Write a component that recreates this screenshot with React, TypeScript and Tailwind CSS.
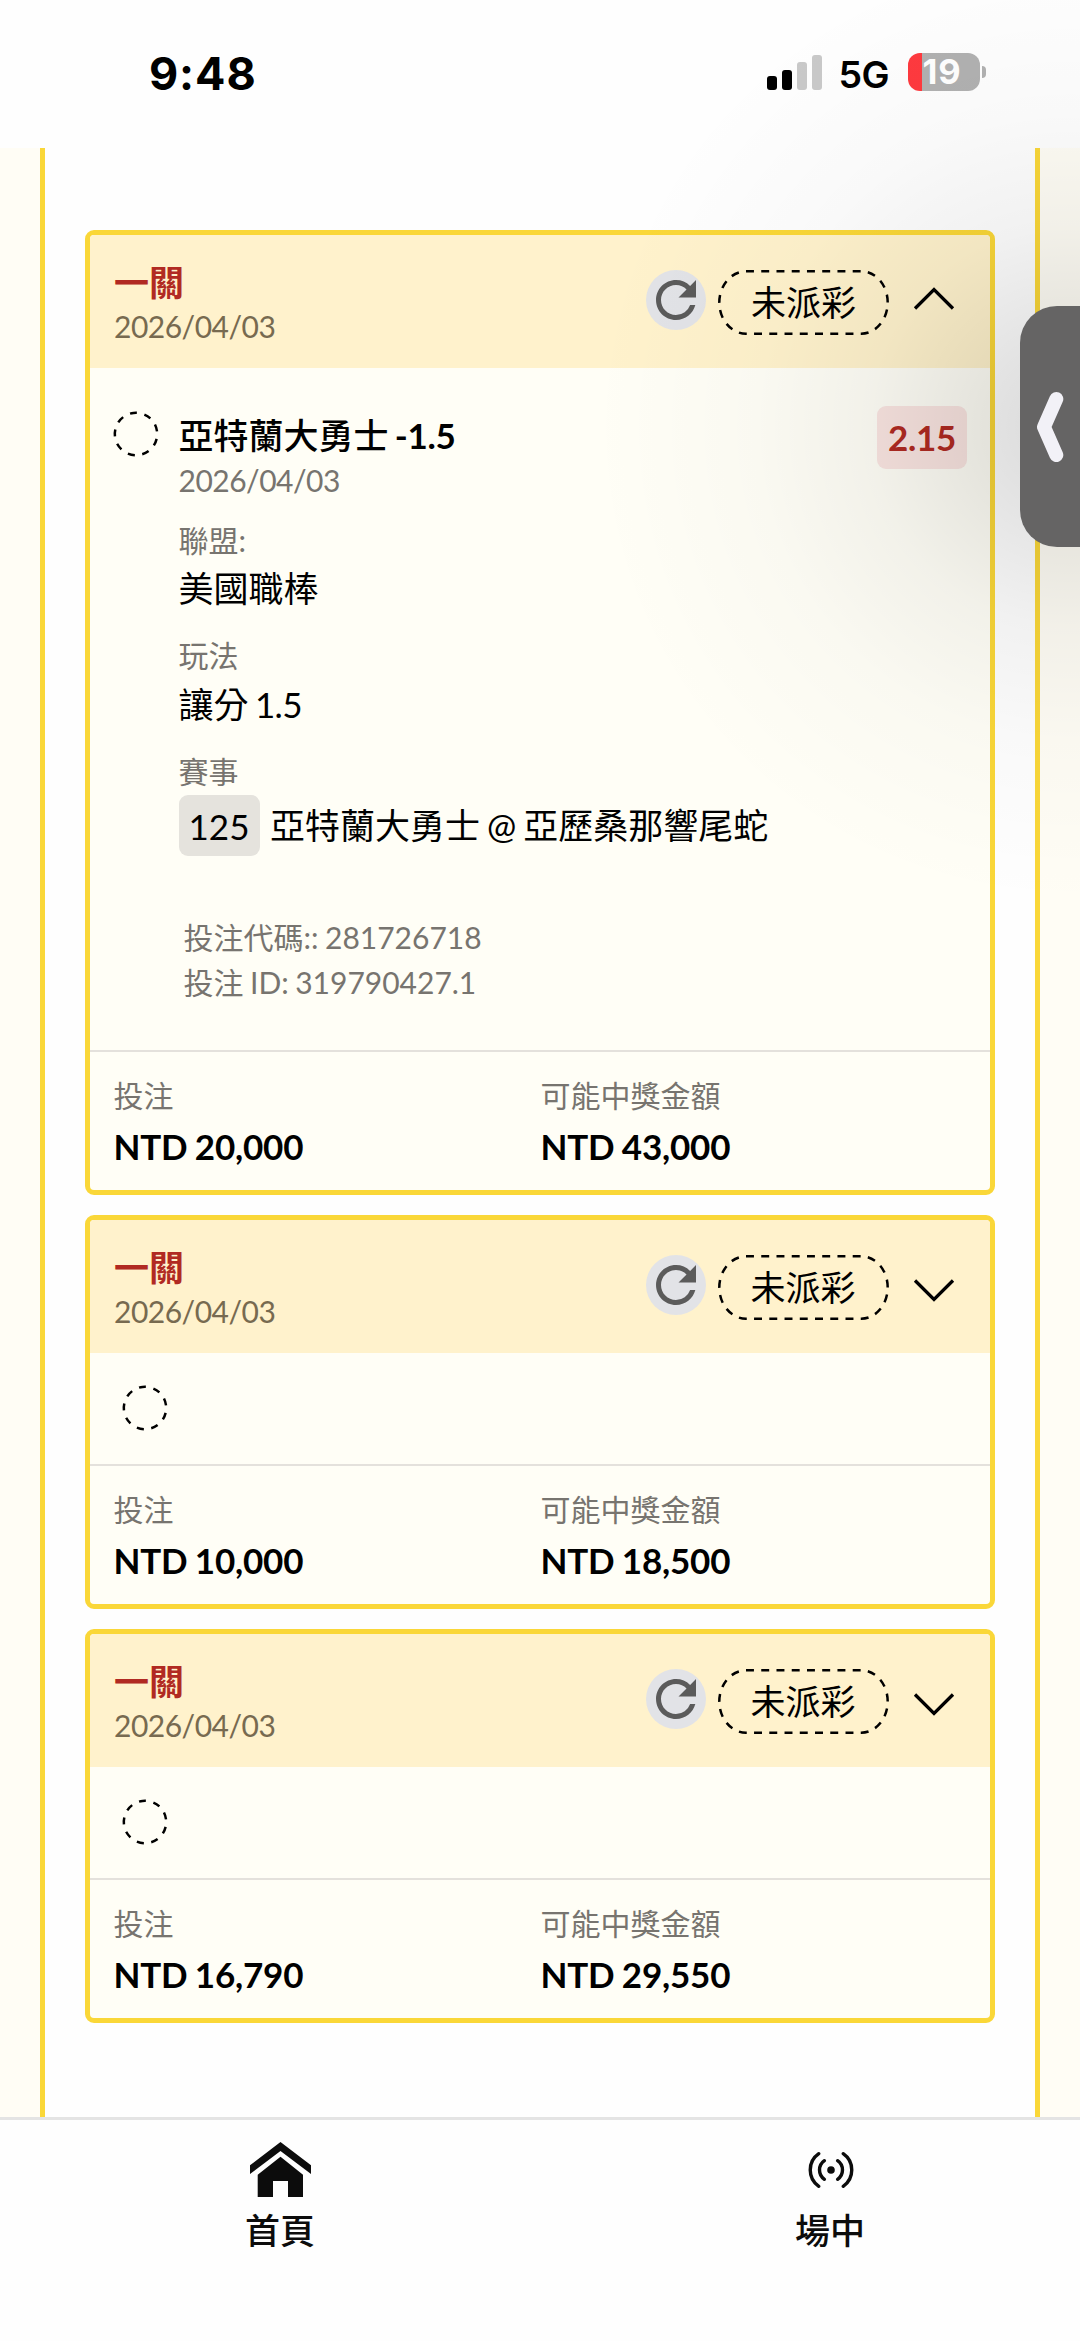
import { MdRefresh } from "react-icons/md";

type Bet = { stake: string; payout: string; open?: boolean };

const bets: Bet[] = [
  { stake: "NTD 20,000", payout: "NTD 43,000", open: true },
  { stake: "NTD 10,000", payout: "NTD 18,500" },
  { stake: "NTD 16,790", payout: "NTD 29,550" },
];

function StatusBar() {
  return (
    <header className="flex h-[148px] items-start justify-between bg-[#fefefe] pr-[94px] pl-[149px] font-['Inter',sans-serif]">
      <div className="mt-[48px] text-[45px] leading-[52px] font-bold tracking-[0.9px] text-black">9:48</div>
      <div className="mt-[53px] flex h-[38px] items-center">
        <div className="flex h-[35px] items-end gap-[5.5px]">
          <div className="h-[14px] w-[9.5px] rounded-[3px] bg-black" />
          <div className="h-[20px] w-[9.5px] rounded-[3px] bg-black" />
          <div className="h-[28px] w-[9.5px] rounded-[3px] bg-[#c9c9c9]" />
          <div className="h-[35px] w-[9.5px] rounded-[3px] bg-[#c9c9c9]" />
        </div>
        <div className="mt-[5px] ml-[17px] w-[51px] text-[37.5px] leading-[38px] font-semibold tracking-[-0.5px] text-black">5G</div>
        <div className="ml-[18px] flex h-[38px] w-[72px] items-center rounded-[12px] bg-[linear-gradient(90deg,#ff3a3f_14px,#b1b1b1_14px)] pl-[15px] text-[34.5px] leading-[38px] font-bold tracking-[0.8px] text-white">
          19
        </div>
        <div className="ml-[2px] h-[12px] w-[4.5px] rounded-r-[5px] bg-[#b1b1b1]" />
      </div>
    </header>
  );
}

function PendingCircle() {
  return (
    <svg className="h-[46px] w-[46px] shrink-0" viewBox="-23 -23 46 46" fill="none">
      <circle r="21.2" stroke="#000" strokeWidth="2.5" pathLength="135" strokeDasharray="7.2 7.8" transform="rotate(173.4)" />
    </svg>
  );
}

function StatusPill() {
  return (
    <div className="relative flex h-[65px] w-[171px] items-center justify-center text-[35px] leading-[40px] text-black">
      <svg className="absolute inset-0 h-full w-full" viewBox="0 0 171 65" fill="none">
        <path
          d="M28 1.3H143A26.5 31.2 0 0 1 169.7 32.5A26.5 31.2 0 0 1 143 63.7H28A26.8 31.2 0 0 1 1.3 32.5A26.8 31.2 0 0 1 28 1.3Z"
          stroke="#000"
          strokeWidth="2.5"
          pathLength="414"
          strokeDasharray="8 7.333"
        />
      </svg>
      <span className="-mt-[2px]">未派彩</span>
    </div>
  );
}

function Chevron({ up }: { up?: boolean }) {
  return (
    <svg className="h-[24px] w-[42px]" viewBox="0 0 42 24" fill="none" stroke="#000" strokeWidth="3.3">
      <path d={up ? "M2 21.5 21 2.5 40 21.5" : "M2 2.5 21 21.5 40 2.5"} />
    </svg>
  );
}

function BetHeader({ open }: { open?: boolean }) {
  return (
    <div className="flex h-[133px] justify-between bg-[#fff2cc] pr-[35px] pl-[24px]">
      <div className="pt-[27px]">
        <div className="text-[35px] leading-[40px] font-bold text-[#b12a22]">一關</div>
        <div className="mt-[5px] text-[30px] leading-[38px] tracking-[-0.5px] text-[#776a50]">2026/04/03</div>
      </div>
      <div className="flex items-start">
        <div className="mt-[35px] h-[60px] w-[60px] rounded-full bg-[#e2e3e7] text-[60px] text-[#5b5b5b]">
          <MdRefresh />
        </div>
        <div className="mt-[35px] ml-[12px]">
          <StatusPill />
        </div>
        <div className={open ? "mt-[52px] ml-[24px]" : "mt-[58px] ml-[24.5px]"}>
          <Chevron up={open} />
        </div>
      </div>
    </div>
  );
}

function BetDetails() {
  return (
    <div className="flex h-[682px] pr-[23px] pl-[24px]">
      <div className="-ml-[1.5px] pt-[42.5px]">
        <PendingCircle />
      </div>
      <div className="ml-[20px] flex-1 pt-[47px] text-black">
        <div className="text-[35px] leading-[40px] font-medium">
          亞特蘭大勇士 <span className="font-bold tracking-[-0.3px]">-1.5</span>
        </div>
        <div className="mt-[6px] text-[30px] leading-[38px] tracking-[-0.5px] text-[#77746f]">2026/04/03</div>
        <div className="mt-[21px] text-[30px] leading-[40px] text-[#77746f]">聯盟:</div>
        <div className="mt-[6px] text-[35px] leading-[44px]">美國職棒</div>
        <div className="mt-[25px] text-[30px] leading-[40px] text-[#77746f]">玩法</div>
        <div className="mt-[7px] text-[35px] leading-[44px]">
          讓分 <span className="tracking-[-0.7px]">1.5</span>
        </div>
        <div className="mt-[25px] text-[30px] leading-[40px] text-[#77746f]">賽事</div>
        <div className="mt-[4px] flex h-[61px] items-center text-[35px] leading-[44px] whitespace-nowrap">
          <span className="flex h-[61px] w-[81px] items-center justify-center rounded-[9px] bg-[#e5e3dd]">125</span>
          <span className="-mt-[2px] ml-[10.5px] [word-spacing:-2px]">亞特蘭大勇士 @ 亞歷桑那響尾蛇</span>
        </div>
        <div className="mt-[59px] ml-[5px] text-[30px] leading-[45px] text-[#77746f] [word-spacing:-1.2px]">
          <div>投注代碼:: 281726718</div>
          <div>投注 ID: 319790427.1</div>
        </div>
      </div>
      <div className="mt-[38px] flex h-[63px] w-[90px] shrink-0 items-center justify-center rounded-[9px] bg-[#fae5e1] text-[35px] font-bold tracking-[-0.3px] text-[#b12a22]">
        2.15
      </div>
    </div>
  );
}

function Amount({ label, value }: { label: string; value: string }) {
  return (
    <div>
      <div className="text-[30px] leading-[40px] text-[#77746f]">{label}</div>
      <div className="mt-[9px] text-[35px] leading-[44px] font-bold tracking-[-0.2px] text-black [word-spacing:-1px]">{value}</div>
    </div>
  );
}

function BetCard({ bet }: { bet: Bet }) {
  return (
    <article className="overflow-hidden rounded-[9px] border-[5px] border-[#fad738] bg-[#fffef6]">
      <BetHeader open={bet.open} />
      {bet.open ? (
        <BetDetails />
      ) : (
        <div className="flex h-[111px] items-center pb-[1px] pl-[32px]">
          <PendingCircle />
        </div>
      )}
      <div className="grid h-[140px] grid-cols-[427px_1fr] border-t-2 border-[#e4e1dc] pt-[23px] pl-[23.5px]">
        <Amount label="投注" value={bet.stake} />
        <Amount label="可能中獎金額" value={bet.payout} />
      </div>
    </article>
  );
}

function HomeIcon() {
  return (
    <svg className="h-[55px] w-[61px]" viewBox="0 0 61 55" fill="#0c0c0c">
      <path d="M30.5 0 61 23.3V32L30.5 9 0 32V23.3Z" />
      <path d="M30.5 14.7 53 32.7V55H38V39H23V55H7.7V32.7Z" />
    </svg>
  );
}

function LiveIcon() {
  return (
    <svg className="ml-[2px] h-[40px] w-[48px]" viewBox="-24 -20 48 40" fill="none" stroke="#0c0c0c" strokeWidth="3.4" strokeLinecap="round">
      <path d="M-12.2 -16.3A19.8 19.8 0 0 0 -12.2 16.3M12.2 -16.3A19.8 19.8 0 0 1 12.2 16.3" />
      <path d="M-6.6 -9.3A11.3 11.3 0 0 0 -6.6 9.3M6.6 -9.3A11.3 11.3 0 0 1 6.6 9.3" />
      <circle r="3.8" fill="#0c0c0c" stroke="none" />
    </svg>
  );
}

function BottomNav() {
  return (
    <nav className="grid h-[224px] grid-cols-[550px_1fr] border-t-[3px] border-[#e4e4e4] bg-[#fefefe] pl-[5px] text-[35px] leading-[44px] font-medium text-[#0c0c0c]">
      <div className="flex flex-col items-center pt-[22px]">
        <HomeIcon />
        <span className="mt-[11px]">首頁</span>
      </div>
      <div className="flex w-[550px] flex-col items-center pt-[30px]">
        <LiveIcon />
        <span className="mt-[18px]">場中</span>
      </div>
    </nav>
  );
}

function SideTab() {
  return (
    <>
      <div className="pointer-events-none absolute top-0 right-0 h-[940px] w-[520px] bg-[radial-gradient(circle_480px_at_510px_427px,rgba(0,0,0,0.145)_0%,rgba(0,0,0,0.105)_18%,rgba(0,0,0,0.05)_42%,rgba(0,0,0,0.018)_66%,rgba(0,0,0,0)_100%)]" />
      <div className="absolute top-[306px] right-0 flex h-[241px] w-[60px] items-center rounded-l-[37px] bg-[#656464]">
        <svg className="ml-[16px] h-[72px] w-[29px]" viewBox="0 0 29 72" fill="none" stroke="#f2f1f7" strokeWidth="14" strokeLinecap="round" strokeLinejoin="round">
          <path d="M20.3 8 8 36 20.3 64" />
        </svg>
      </div>
    </>
  );
}

export default function App() {
  return (
    <div className="relative flex h-[2341px] w-[1080px] flex-col overflow-hidden bg-white font-['Lato','Noto_Sans_CJK_TC',sans-serif] [word-spacing:-2.5px]">
      <StatusBar />
      <main className="flex-1 bg-[#fffdf5] px-[40px]">
        <div className="flex h-full flex-col gap-[20px] border-x-[5px] border-[#fad738] bg-[#fefefe] px-[40px] pt-[82px]">
          {bets.map((bet) => (
            <BetCard key={bet.stake} bet={bet} />
          ))}
        </div>
      </main>
      <BottomNav />
      <SideTab />
    </div>
  );
}
